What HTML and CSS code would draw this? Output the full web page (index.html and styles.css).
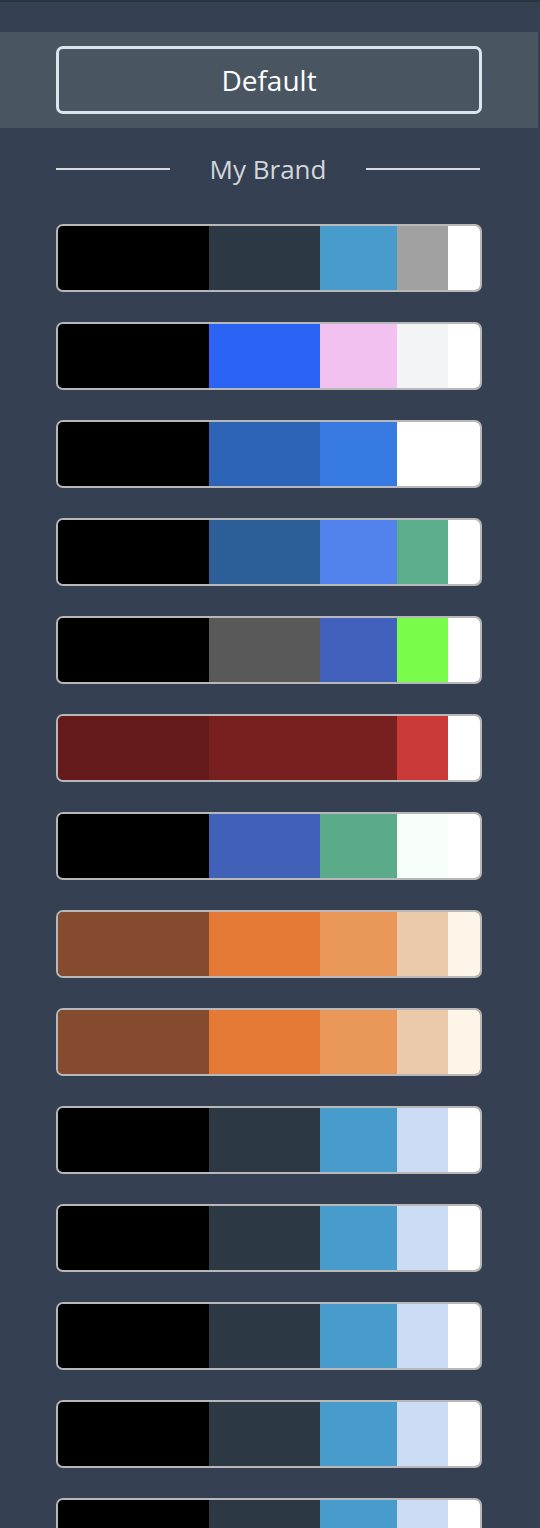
FILE: index.html
```html
<!DOCTYPE html>
<html>
<head>
<meta charset="utf-8">
<link rel="stylesheet" href="styles.css">
</head>
<body>
<div class="topstrip"></div>
<div class="band">
  <button class="default-btn">Default</button>
</div>
<div class="content">
  <div class="divider">
    <span class="line"></span>
    <span class="label">My Brand</span>
    <span class="line"></span>
  </div>
  <div class="palettes">
    <div class="palette"><span class="s1 c-000"></span><span class="s2 c-slate"></span><span class="s3 c-sky"></span><span class="s4 c-gray"></span><span class="s5 c-fff"></span></div>
    <div class="palette"><span class="s1 c-000"></span><span class="s2 c-blue"></span><span class="s3 c-pink"></span><span class="s4 c-offwhite"></span><span class="s5 c-fff"></span></div>
    <div class="palette"><span class="s1 c-000"></span><span class="s2 c-royal"></span><span class="s3 c-azure"></span><span class="s4 c-fff"></span><span class="s5 c-fff"></span></div>
    <div class="palette"><span class="s1 c-000"></span><span class="s2 c-steel"></span><span class="s3 c-corn"></span><span class="s4 c-green"></span><span class="s5 c-fff"></span></div>
    <div class="palette"><span class="s1 c-000"></span><span class="s2 c-dgray"></span><span class="s3 c-indigo"></span><span class="s4 c-lime"></span><span class="s5 c-fff"></span></div>
    <div class="palette"><span class="s1 c-maroon"></span><span class="s2 c-red"></span><span class="s3 c-red"></span><span class="s4 c-brick"></span><span class="s5 c-fff"></span></div>
    <div class="palette"><span class="s1 c-000"></span><span class="s2 c-indigo2"></span><span class="s3 c-green2"></span><span class="s4 c-mint"></span><span class="s5 c-fff"></span></div>
    <div class="palette"><span class="s1 c-brown"></span><span class="s2 c-orange"></span><span class="s3 c-peach"></span><span class="s4 c-sand"></span><span class="s5 c-cream"></span></div>
    <div class="palette"><span class="s1 c-brown"></span><span class="s2 c-orange"></span><span class="s3 c-peach"></span><span class="s4 c-sand"></span><span class="s5 c-cream"></span></div>
    <div class="palette"><span class="s1 c-000"></span><span class="s2 c-slate"></span><span class="s3 c-sky"></span><span class="s4 c-ice"></span><span class="s5 c-fff"></span></div>
    <div class="palette"><span class="s1 c-000"></span><span class="s2 c-slate"></span><span class="s3 c-sky"></span><span class="s4 c-ice"></span><span class="s5 c-fff"></span></div>
    <div class="palette"><span class="s1 c-000"></span><span class="s2 c-slate"></span><span class="s3 c-sky"></span><span class="s4 c-ice"></span><span class="s5 c-fff"></span></div>
    <div class="palette"><span class="s1 c-000"></span><span class="s2 c-slate"></span><span class="s3 c-sky"></span><span class="s4 c-ice"></span><span class="s5 c-fff"></span></div>
    <div class="palette"><span class="s1 c-000"></span><span class="s2 c-slate"></span><span class="s3 c-sky"></span><span class="s4 c-ice"></span><span class="s5 c-fff"></span></div>
  </div>
</div>
</body>
</html>
```

FILE: styles.css
```css
html, body {
  margin: 0;
  padding: 0;
}
body {
  background: #354152;
  font-family: "Open Sans", "Noto Sans", sans-serif;
  width: 540px;
  height: 1528px;
  overflow: hidden;
}
.topstrip {
  height: 2px;
  background: #2a3340;
}
.band {
  margin-top: 30px;
  width: 538px;
  background: #4a5562;
  padding: 14px 0;
  box-sizing: border-box;
  height: 96px;
  display: flex;
}
.default-btn {
  margin-left: 56px;
  width: 426px;
  height: 68px;
  box-sizing: border-box;
  border: 3px solid #dce4ec;
  border-radius: 7px;
  background: transparent;
  color: #ffffff;
  font-family: "Open Sans", "Noto Sans", sans-serif;
  font-size: 28px;
  padding: 0;
  line-height: 1;
}
.content {
  padding-left: 56px;
  width: 426px;
}
.divider {
  display: flex;
  align-items: center;
  width: 424px;
  height: 34px;
  margin-top: 24px;
}
.line {
  flex: 0 0 114px;
  height: 2px;
  background: #d6dae0;
}
.label {
  flex: 1;
  text-align: center;
  color: #d3d6da;
  font-size: 26px;
  line-height: 34px;
}
.palettes {
  margin-top: 38px;
  display: flex;
  flex-direction: column;
  gap: 30px;
}
.palette {
  display: flex;
  height: 68px;
  box-sizing: border-box;
  border: 2px solid #b8b8b8;
  border-radius: 7px;
  overflow: hidden;
  flex-shrink: 0;
}
.palette span { display: block; height: 100%; }
.s1 { width: 151px; }
.s2 { width: 111px; }
.s3 { width: 77px; }
.s4 { width: 51px; }
.s5 { flex: 1; }

.c-000 { background: #000000; }
.c-fff { background: #ffffff; }
.c-slate { background: #2c3844; }
.c-sky { background: #489ccb; }
.c-gray { background: #a1a1a1; }
.c-blue { background: #2b64f4; }
.c-pink { background: #f3c1ef; }
.c-offwhite { background: #f3f4f6; }
.c-royal { background: #2d64b8; }
.c-azure { background: #367ae2; }
.c-steel { background: #2c5f98; }
.c-corn { background: #5283ec; }
.c-green { background: #5cad8b; }
.c-dgray { background: #595959; }
.c-indigo { background: #4161bc; }
.c-lime { background: #79fc4a; }
.c-maroon { background: #651b1b; }
.c-red { background: #77201f; }
.c-brick { background: #c93a38; }
.c-indigo2 { background: #4161b8; }
.c-green2 { background: #5bab8b; }
.c-mint { background: #f8fff8; }
.c-brown { background: #854b2f; }
.c-orange { background: #e57a36; }
.c-peach { background: #e9985a; }
.c-sand { background: #ebcaab; }
.c-cream { background: #fdf6e8; }
.c-ice { background: #cbdcf4; }
```
